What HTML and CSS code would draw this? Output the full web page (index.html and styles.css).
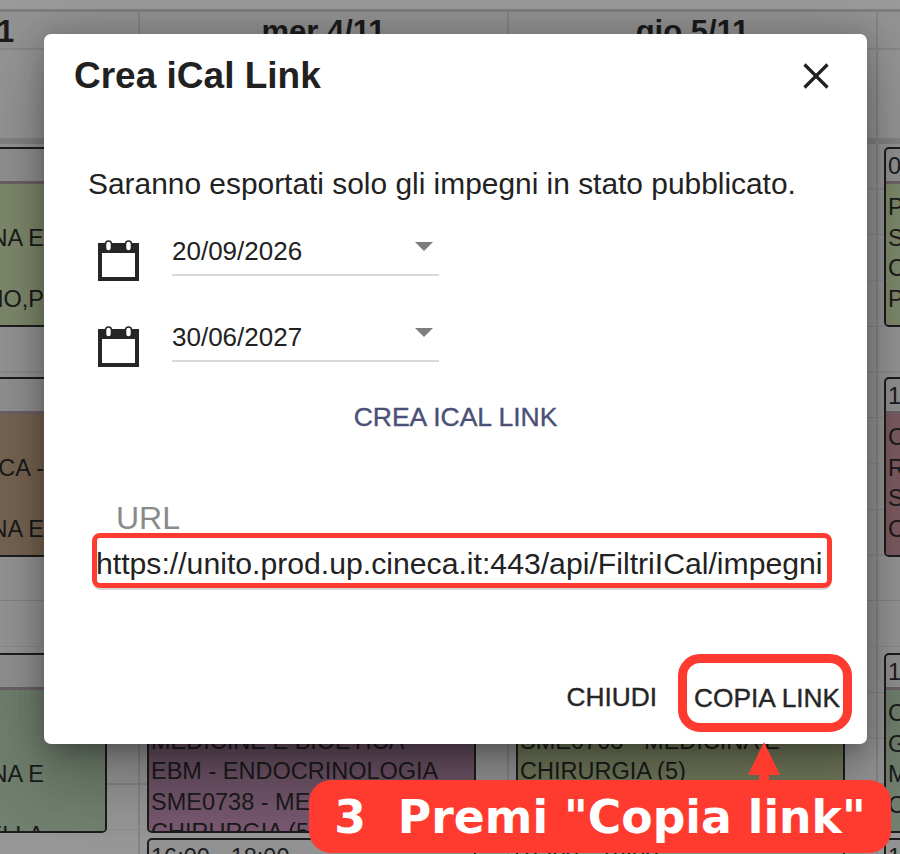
FILE: index.html
```html
<!DOCTYPE html>
<html lang="it">
<head>
<meta charset="utf-8">
<title>Crea iCal Link</title>
<link rel="stylesheet" href="styles.css">
</head>
<body>
<div class="calendar">
  <div class="topband"></div>
  <div class="columns">
    <section class="col col-a">
      <div class="day day-left">1</div>
      <div class="slots">
        <article class="event"><div class="ev-head"></div><div class="ev-body green"><p></p><p>NA E</p><p></p><p>NO,P</p></div></article>
        <article class="event"><div class="ev-head"></div><div class="ev-body brown"><p></p><p>CA -</p><p></p><p>NA E</p></div></article>
        <article class="event"><div class="ev-head"></div><div class="ev-body teal"><p></p><p></p><p>NA E</p><p></p><p>ELLA</p></div></article>
      </div>
    </section>
    <section class="col col-b">
      <div class="day">mer 4/11</div>
      <div class="slots">
        <article class="event"><div class="ev-head"></div><div class="ev-body green"></div></article>
        <article class="event"><div class="ev-head"></div><div class="ev-body brown"></div></article>
        <article class="event"><div class="ev-head"></div><div class="ev-body plum"><p></p><p>MEDICINE E BIOETICA</p><p>EBM - ENDOCRINOLOGIA</p><p>SME0738 - MEDICINA E</p><p>CHIRURGIA (5)</p></div></article>
        <article class="event"><div class="ev-head">16:00 - 18:00</div></article>
      </div>
    </section>
    <section class="col col-b">
      <div class="day">gio 5/11</div>
      <div class="slots">
        <article class="event"><div class="ev-head"></div><div class="ev-body green"></div></article>
        <article class="event"><div class="ev-head"></div><div class="ev-body brown"></div></article>
        <article class="event"><div class="ev-head"></div><div class="ev-body olive"><p></p><p>SME0763 - MEDICINA E</p><p>CHIRURGIA (5)</p></div></article>
        <article class="event"><div class="ev-head">16:00 - 18:00</div></article>
      </div>
    </section>
    <section class="col col-d">
      <div class="day"></div>
      <div class="slots">
        <article class="event"><div class="ev-head">09:00</div><div class="ev-body green"><p>P</p><p>S</p><p>C</p><p>P</p></div></article>
        <article class="event"><div class="ev-head">11:00</div><div class="ev-body rose"><p>C</p><p>R</p><p>S</p><p>C</p></div></article>
        <article class="event"><div class="ev-head">14:00</div><div class="ev-body teal"><p>C</p><p>G</p><p>M</p><p>C</p></div></article>
        <article class="event"><div class="ev-head">16:00</div></article>
      </div>
    </section>
  </div>
</div>

<div class="dialog" role="dialog">
  <header class="dialog-head">
    <h2 class="dialog-title">Crea iCal Link</h2>
    <svg class="close" viewBox="0 0 26 26" width="26" height="26" aria-hidden="true"><path d="M1.5 1.5 24.5 24.5M24.5 1.5 1.5 24.5"/></svg>
  </header>
  <p class="notice">Saranno esportati solo gli impegni in stato pubblicato.</p>
  <div class="date-row">
    <svg class="cal" viewBox="0 0 41 41" width="41" height="41" aria-hidden="true"><path class="cal-frame" fill-rule="evenodd" d="M0 3H41V41H0ZM4 13V37H37V13Z"/><rect class="cal-ring" x="7.5" y="1" width="6" height="10" rx="3"/><rect class="cal-ring" x="27.5" y="1" width="6" height="10" rx="3"/></svg>
    <div class="select"><span>20/09/2026</span><i class="caret"></i></div>
  </div>
  <div class="date-row">
    <svg class="cal" viewBox="0 0 41 41" width="41" height="41" aria-hidden="true"><path class="cal-frame" fill-rule="evenodd" d="M0 3H41V41H0ZM4 13V37H37V13Z"/><rect class="cal-ring" x="7.5" y="1" width="6" height="10" rx="3"/><rect class="cal-ring" x="27.5" y="1" width="6" height="10" rx="3"/></svg>
    <div class="select"><span>30/06/2027</span><i class="caret"></i></div>
  </div>
  <div class="create">CREA ICAL LINK</div>
  <div class="url-field">
    <label class="url-label">URL</label>
    <div class="url-box">https://unito.prod.up.cineca.it:443/api/FiltriICal/impegni</div>
  </div>
  <footer class="dialog-actions">
    <span class="action action-close">CHIUDI</span>
    <span class="action action-copy">COPIA LINK</span>
  </footer>
</div>

<svg class="arrow" viewBox="0 0 34 40" width="34" height="40" aria-hidden="true"><path d="M17 0 33 33H22V40H12V33H1Z"/></svg>
<div class="callout">3&nbsp; Premi "Copia link"</div>
</body>
</html>
```

FILE: styles.css
```css
* { box-sizing: border-box; }
html, body { margin: 0; height: 100%; }
body {
  position: relative;
  width: 900px;
  height: 854px;
  overflow: hidden;
  background: #979797;
  font-family: "Liberation Sans", Arial, sans-serif;
  color: #222;
}
.calendar { height: 854px; overflow: hidden; }
.topband { height: 12px; background: #9b9b9b; border-bottom: 3px solid #7f7f7f; }
.columns { display: flex; height: 842px; }
.col {
  flex: none;
  border-right: 2px solid #858585;
}
.col-a { width: 140px; }
.col-b { width: 369px; }
.col-d { width: 391px; border-right: 0; }
.day {
  height: 38px;
  padding-top: 2px;
  text-align: center;
  font-size: 31px;
  font-weight: 700;
  line-height: 36px;
  color: #1c1c1c;
  background: #939393;
  border-bottom: 2px solid #888;
}
.day-left { text-align: left; margin-left: -3px; }
.slots {
  height: 804px;
  padding: 97px 0 0 7px;
  display: flex;
  flex-direction: column;
  gap: 50px;
  background:
    linear-gradient(#848484 0 0) 0 88px / 100% 6px no-repeat,
    repeating-linear-gradient(to bottom, transparent 0 44px, #8d8d8d 44px 45.75px, transparent 45.75px 90px, #868686 90px 91.5px) 0 94px / 100% 100% no-repeat;
  background-color: #969696;
}
.col-a .slots { padding-left: 0; }
.col-d .slots { padding-left: 6px; }
.event {
  width: 329px;
  height: 180px;
  flex: none;
  border: 2px solid #1d1d1d;
  border-radius: 5px;
  overflow: hidden;
  background: #929292;
}
.event:nth-child(3) { margin-top: 46px; }
.event:nth-child(4) { margin-top: -45px; }
.col-a .event { margin-left: -222px; text-align: right; }
.col-a .ev-head, .col-a .ev-body { padding-right: 61px; }
.ev-head {
  height: 35px;
  padding: 1px 2px 0;
  font-size: 23.5px;
  line-height: 33px;
  color: #1c1c1c;
  border-bottom: 3px solid #6e6268;
  white-space: nowrap;
  overflow: hidden;
}
.ev-body { height: 143px; padding: 5px 2px 0; }
.ev-body p {
  margin: 0;
  height: 30.5px;
  font-size: 23.5px;
  line-height: 30.5px;
  white-space: nowrap;
  color: #1b1b1b;
}
.col-a .ev-body, .col-d .ev-body { padding-top: 8px; }
.green { background: #7f8a6c; }
.brown { background: #786553; }
.teal { background: #71806f; }
.plum { background: linear-gradient(#5a4855, #7a5a72); }
.olive { background: #727a5c; }
.rose { background: #7d5c62; }

.dialog {
  position: absolute;
  left: 44px;
  top: 34px;
  width: 823px;
  height: 710px;
  display: flex;
  flex-direction: column;
  background: #fff;
  border-radius: 7px;
  box-shadow: 0 18px 24px -11px rgba(0, 0, 0, .2), 0 38px 61px 5px rgba(0, 0, 0, .14), 0 14px 74px 13px rgba(0, 0, 0, .12), 0 0 24px 2px rgba(0, 0, 0, .15);
}
.dialog-head {
  display: flex;
  justify-content: space-between;
  align-items: center;
  padding: 2px 38px 0 30px;
  height: 82px;
}
.dialog-title { margin: 0; font-size: 37px; line-height: 42px; font-weight: 700; color: #212121; }
.close { fill: none; stroke: #212121; stroke-width: 3.2; }
.notice { margin: 48px 0 0 44px; font-size: 29.9px; line-height: 40px; color: #222; }
.date-row { display: flex; align-items: flex-start; margin: 27px 0 0 54px; gap: 33px; height: 62px; }
.date-row + .date-row { margin-top: 24px; }
.cal { flex: none; margin-top: 9px; }
.cal-frame { fill: #262626; }
.cal-ring { fill: #fff; stroke: #262626; stroke-width: 1.6; }
.select {
  position: relative;
  width: 267px;
  height: 45px;
  border-bottom: 2px solid #d9d9d9;
  font-size: 26px;
  line-height: 40px;
  color: #222;
}
.caret {
  position: absolute;
  right: 6px;
  top: 11px;
  width: 0;
  height: 0;
  border: 9px solid transparent;
  border-top: 9px solid #7d7d7d;
  border-bottom: 0;
}
.create {
  margin-top: 22px;
  text-align: center;
  font-size: 26.5px;
  line-height: 32px;
  color: #4a5078;
  -webkit-text-stroke: .35px #4a5078;
}
.url-field { margin: 68px 0 0 48px; width: 740px; }
.url-label { display: block; margin: 0 0 -2px 24px; font-size: 32px; line-height: 34px; color: #8a8a8a; }
.url-box {
  height: 55px;
  border: 5px solid #ff3b30;
  border-radius: 8px;
  text-indent: -1px;
  font-size: 30.2px;
  line-height: 51px;
  white-space: nowrap;
  color: #222;
  box-shadow: 0 3px 0 -1px #d9d9d9;
}
.dialog-actions {
  margin-top: 66px;
  display: flex;
  justify-content: flex-end;
  align-items: center;
  gap: 21px;
  padding-right: 15px;
}
.action {
  font-size: 26.3px;
  line-height: 32px;
  color: #262626;
  -webkit-text-stroke: .4px #262626;
}
.action-close { margin-top: 8px; }
.action-copy {
  width: 174px;
  height: 78px;
  border: 9px solid #ff3b30;
  border-radius: 22px;
  padding: 19px 0 0 7px;
  white-space: nowrap;
}
.arrow { position: absolute; left: 747px; top: 742px; fill: #ff3b30; }
.callout {
  position: absolute;
  left: 309px;
  top: 780px;
  width: 582px;
  height: 73px;
  border-radius: 22px;
  background: #ff3b30;
  color: #fff;
  font-family: "DejaVu Sans", sans-serif;
  font-weight: 700;
  font-size: 45.7px;
  line-height: 75px;
  text-align: center;
  white-space: nowrap;
}
```
